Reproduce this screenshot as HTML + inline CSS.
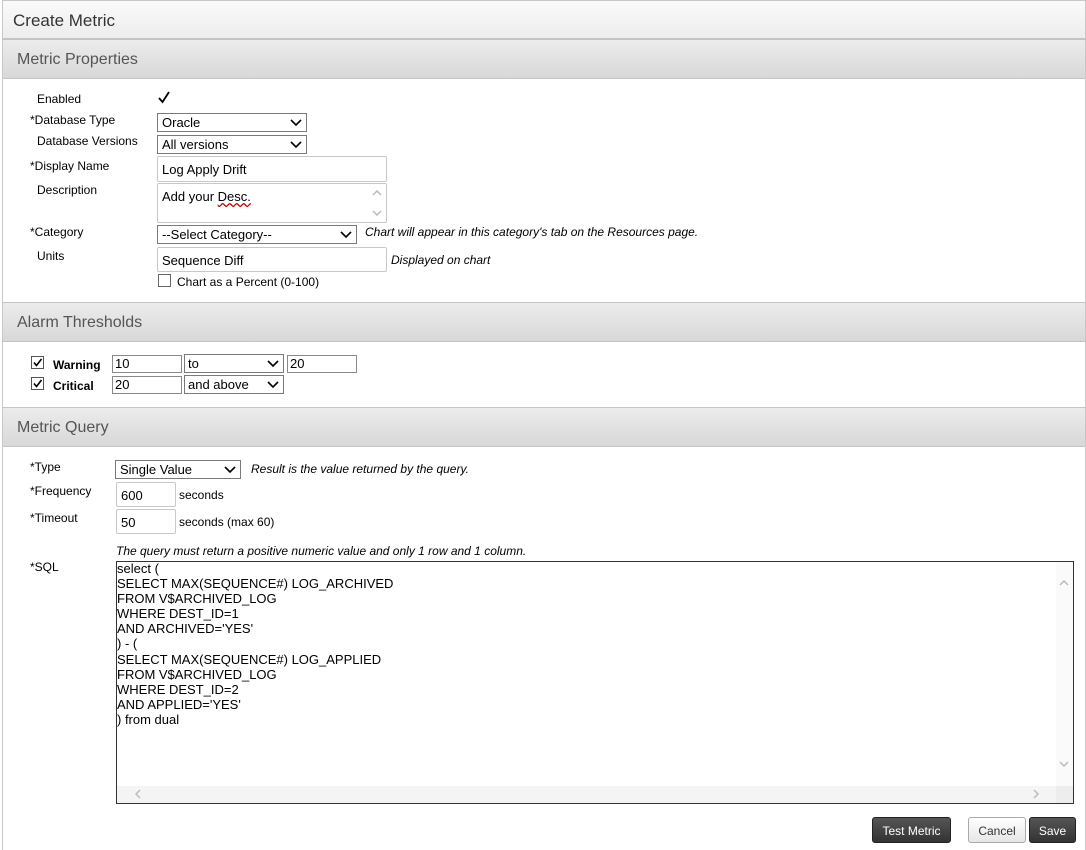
<!DOCTYPE html>
<html><head><style>
*{box-sizing:border-box}
body{margin:0;width:1086px;height:850px;background:#fff;font-family:"Liberation Sans",Arial,sans-serif;font-size:12px;color:#000;position:relative;overflow:hidden}
.a{position:absolute;white-space:nowrap}
.frame{position:absolute;left:2px;top:0;width:1084px;height:850px;border:1px solid #c8c8c8;border-bottom:none}
.title{position:absolute;left:3px;top:1px;width:1082px;height:38px;background:linear-gradient(#fafafa,#ededed);border-bottom:1px solid #c4c4c4;font-size:17px;color:#333;padding:10px 0 0 10px}
.hdr{position:absolute;left:3px;width:1082px;height:40px;background:linear-gradient(#ececec,#d8d8d8);border-top:1px solid #c4c4c4;border-bottom:1px solid #c4c4c4;font-size:16px;color:#555;padding:11px 0 0 14px}
.sel{position:absolute;border:1px solid #7a7a7a;background:#fff;font-size:13px;padding:1px 0 0 4px;height:19px}
.sel svg{position:absolute;right:4px;top:5px}
.inp{position:absolute;border:1px solid #c8c8c8;border-radius:2px;background:#fff;font-size:13px;padding:5px 0 0 4px}
.sm{position:absolute;border:1px solid #8a8a8a;background:#fff;font-size:13px;padding:0 0 0 2px;height:18px}
.cb{position:absolute;width:13px;height:13px;border:1px solid #555;background:#fff}
.i{font-style:italic;font-size:12px}
.btn{position:absolute;height:26px;border-radius:3px;font-size:12px;text-align:center;padding-top:6px}
</style></head><body>
<div class="frame"></div>
<div class="title">Create Metric</div>
<div class="hdr" style="top:39px">Metric Properties</div>

<div class="a" style="left:37px;top:92px">Enabled</div>
<svg class="a" style="left:157px;top:91px" width="14" height="14"><path d="M2 7l3.5 4L12 1" stroke="#000" stroke-width="1.8" fill="none"/></svg>
<div class="a" style="left:30px;top:113px">*Database Type</div>
<div class="sel" style="left:157px;top:113px;width:150px">Oracle<svg width="12" height="8"><path d="M1 1l5 5 5-5" stroke="#000" stroke-width="1.6" fill="none"/></svg></div>
<div class="a" style="left:37px;top:134px">Database Versions</div>
<div class="sel" style="left:157px;top:135px;width:150px">All versions<svg width="12" height="8"><path d="M1 1l5 5 5-5" stroke="#000" stroke-width="1.6" fill="none"/></svg></div>
<div class="a" style="left:30px;top:159px">*Display Name</div>
<div class="inp" style="left:157px;top:156px;width:230px;height:26px">Log Apply Drift</div>
<div class="a" style="left:37px;top:183px">Description</div>
<div class="inp" style="left:157px;top:183px;width:230px;height:40px">Add your <span style="text-decoration:underline wavy #c00">Desc.</span>
<svg style="position:absolute;right:4px;top:6px" width="10" height="6"><path d="M1 5l4-4 4 4" stroke="#bbb" fill="none" stroke-width="1.5"/></svg>
<svg style="position:absolute;right:4px;top:26px" width="10" height="6"><path d="M1 1l4 4 4-4" stroke="#bbb" fill="none" stroke-width="1.5"/></svg></div>
<div class="a" style="left:30px;top:225px">*Category</div>
<div class="sel" style="left:157px;top:225px;width:200px">--Select Category--<svg width="12" height="8"><path d="M1 1l5 5 5-5" stroke="#000" stroke-width="1.6" fill="none"/></svg></div>
<div class="a i" style="left:365px;top:225px">Chart will appear in this category's tab on the Resources page.</div>
<div class="a" style="left:37px;top:249px">Units</div>
<div class="inp" style="left:157px;top:247px;width:230px;height:25px">Sequence Diff</div>
<div class="a i" style="left:391px;top:253px">Displayed on chart</div>
<div class="cb" style="left:158px;top:274px;border-color:#666"></div>
<div class="a" style="left:177px;top:275px">Chart as a Percent (0-100)</div>

<div class="hdr" style="top:302px">Alarm Thresholds</div>
<div class="cb" style="left:31px;top:356px"></div><svg class="a" style="left:32px;top:357px" width="11" height="11"><path d="M2 5.5l2.5 3L9.5 2" stroke="#000" stroke-width="1.6" fill="none"/></svg>
<div class="a" style="left:53px;top:358px;font-weight:bold">Warning</div>
<div class="sm" style="left:112px;top:355px;width:70px">10</div>
<div class="sel" style="left:184px;top:354px;width:100px;padding-left:3px">to<svg width="12" height="8"><path d="M1 1l5 5 5-5" stroke="#000" stroke-width="1.6" fill="none"/></svg></div>
<div class="sm" style="left:287px;top:355px;width:70px">20</div>
<div class="cb" style="left:31px;top:377px"></div><svg class="a" style="left:32px;top:378px" width="11" height="11"><path d="M2 5.5l2.5 3L9.5 2" stroke="#000" stroke-width="1.6" fill="none"/></svg>
<div class="a" style="left:53px;top:379px;font-weight:bold">Critical</div>
<div class="sm" style="left:112px;top:376px;width:70px">20</div>
<div class="sel" style="left:184px;top:375px;width:100px;padding-left:3px">and above<svg width="12" height="8"><path d="M1 1l5 5 5-5" stroke="#000" stroke-width="1.6" fill="none"/></svg></div>

<div class="hdr" style="top:407px">Metric Query</div>
<div class="a" style="left:30px;top:460px">*Type</div>
<div class="sel" style="left:115px;top:460px;width:126px">Single Value<svg width="12" height="8"><path d="M1 1l5 5 5-5" stroke="#000" stroke-width="1.6" fill="none"/></svg></div>
<div class="a i" style="left:251px;top:462px">Result is the value returned by the query.</div>
<div class="a" style="left:30px;top:484px">*Frequency</div>
<div class="inp" style="left:116px;top:482px;width:60px;height:25px">600</div>
<div class="a" style="left:179px;top:488px">seconds</div>
<div class="a" style="left:30px;top:511px">*Timeout</div>
<div class="inp" style="left:116px;top:509px;width:60px;height:25px">50</div>
<div class="a" style="left:179px;top:515px">seconds (max 60)</div>
<div class="a i" style="left:116px;top:544px">The query must return a positive numeric value and only 1 row and 1 column.</div>
<div class="a" style="left:30px;top:560px">*SQL</div>
<div style="position:absolute;left:116px;top:561px;width:958px;height:243px;border:1px solid #333;background:#fff">
<div style="position:absolute;left:0;top:-1px;font-size:13px;line-height:15.1px;white-space:pre">select (
SELECT MAX(SEQUENCE#) LOG_ARCHIVED
FROM V$ARCHIVED_LOG
WHERE DEST_ID=1
AND ARCHIVED='YES'
) - (
SELECT MAX(SEQUENCE#) LOG_APPLIED
FROM V$ARCHIVED_LOG
WHERE DEST_ID=2
AND APPLIED='YES'
) from dual</div>
<div style="position:absolute;right:0;top:0;width:17px;height:224px;background:#fafafa"></div>
<div style="position:absolute;left:0;bottom:0;width:956px;height:17px;background:#f4f4f4"></div>
<div style="position:absolute;right:0;bottom:0;width:17px;height:17px;background:#ededed"></div>
<svg style="position:absolute;right:4px;top:18px" width="10" height="6"><path d="M1 5l4-4 4 4" stroke="#bbb" fill="none" stroke-width="1.5"/></svg>
<svg style="position:absolute;right:4px;top:199px" width="10" height="6"><path d="M1 1l4 4 4-4" stroke="#bbb" fill="none" stroke-width="1.5"/></svg>
<svg style="position:absolute;left:18px;bottom:4px" width="6" height="10"><path d="M5 1l-4 4 4 4" stroke="#bbb" fill="none" stroke-width="1.5"/></svg>
<svg style="position:absolute;right:34px;bottom:4px" width="6" height="10"><path d="M1 1l4 4-4 4" stroke="#bbb" fill="none" stroke-width="1.5"/></svg>
</div>
<div class="btn" style="left:872px;top:817px;width:79px;background:linear-gradient(#555,#333);color:#fff;border:1px solid #222">Test Metric</div>
<div class="btn" style="left:968px;top:817px;width:58px;background:linear-gradient(#fff,#e6e6e6);color:#333;border:1px solid #aaa">Cancel</div>
<div class="btn" style="left:1029px;top:817px;width:47px;background:linear-gradient(#555,#333);color:#fff;border:1px solid #222">Save</div>
</body></html>
